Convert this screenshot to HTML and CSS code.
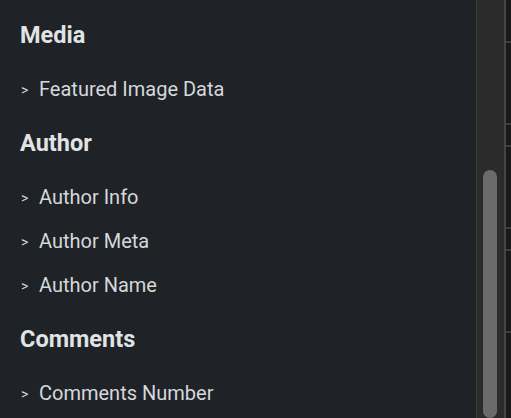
FILE: index.html
```html
<!DOCTYPE html>
<html lang="en">
  <head>
    <meta charset="UTF-8" />
    <meta name="viewport" content="width=device-width, initial-scale=1.0" />
    <title>Dynamic Tags</title>
    <link rel="stylesheet" href="styles.css">
  </head>
  <body>
    <div class="panel">
      <div class="tags">
        <div class="group">
          <h3 class="group-title group-first">Media</h3>
          <a href="javascript:;" class="tag"><span class="arrow">&gt;</span>Featured Image Data</a>
        </div>
        <div class="group">
          <h3 class="group-title">Author</h3>
          <a href="javascript:;" class="tag"><span class="arrow">&gt;</span>Author Info</a>
          <a href="javascript:;" class="tag"><span class="arrow">&gt;</span>Author Meta</a>
          <a href="javascript:;" class="tag"><span class="arrow">&gt;</span>Author Name</a>
        </div>
        <div class="group">
          <h3 class="group-title">Comments</h3>
          <a href="javascript:;" class="tag"><span class="arrow">&gt;</span>Comments Number</a>
        </div>
      </div>

      <div class="scrollbar">
        <div class="thumb"></div>
      </div>
      <div class="gutter">
        <i class="tick" style="top: 41px"></i>
        <i class="tick" style="top: 123px"></i>
        <i class="tick" style="top: 145px"></i>
        <i class="tick" style="top: 227px"></i>
        <i class="tick" style="top: 249px"></i>
        <i class="tick" style="top: 331px"></i>
      </div>
    </div>
  </body>
</html>
```

FILE: styles.css
```css
* {
  margin: 0;
  padding: 0;
  box-sizing: border-box;
}
html,
body {
  height: 100%;
}
body {
  background-color: #1f2226;
  font-family: Roboto, "Liberation Sans", sans-serif;
  color: #d5d8dc;
  overflow: hidden;
}
a {
  text-decoration: none;
  color: inherit;
}
.panel {
  display: flex;
  height: 100%;
}
.tags {
  flex: 1;
  padding-left: 20px;
}
.group-title {
  height: 64px;
  line-height: 64px;
  font-size: 23.5px;
  font-weight: 700;
  color: #e1e3e5;
}
.group-first {
  margin-top: 3px;
}
.tag {
  display: flex;
  align-items: center;
  height: 44px;
  font-size: 20px;
}
.arrow {
  width: 19px;
  padding-left: 1px;
  padding-top: 2px;
  font-size: 14px;
}
.scrollbar {
  width: 30px;
  padding-top: 170px;
  background: #2b2b2c;
  border-left: 1px solid #3b3b3c;
  border-right: 2px solid #454546;
  display: flex;
  justify-content: center;
}
.thumb {
  width: 14px;
  height: 248px;
  margin-left: -2px;
  background: #6b6b6b;
  border-radius: 7px;
}
.gutter {
  position: relative;
  width: 5px;
  background: #17191b;
}
.tick {
  position: absolute;
  left: 0;
  width: 5px;
  height: 2px;
  background: #3a3b3d;
}
```
